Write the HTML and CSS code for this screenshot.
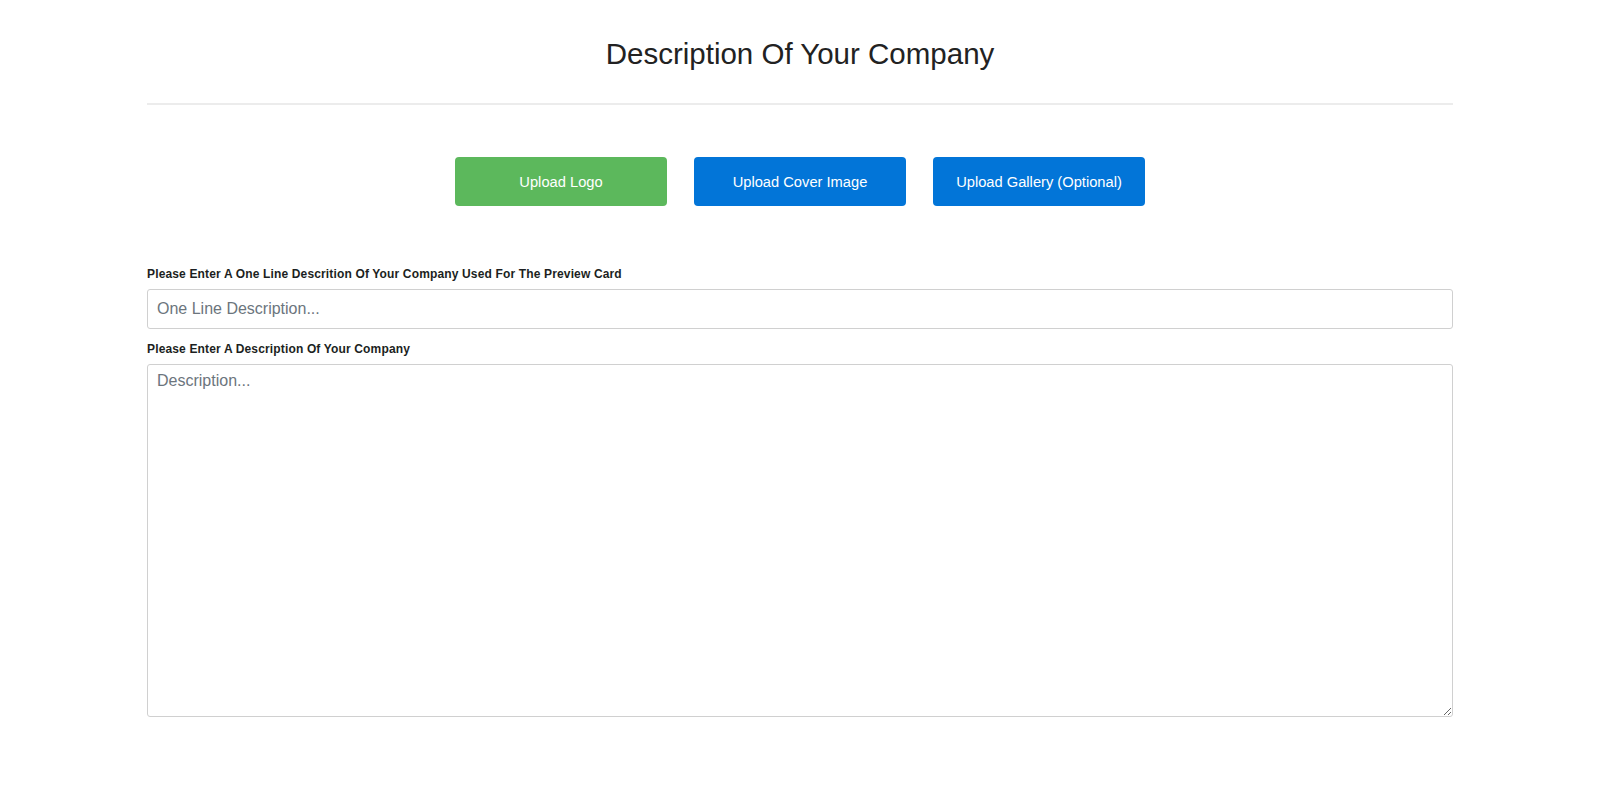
FILE: index.html
```html
<!DOCTYPE html>
<html lang="en">
<head>
<meta charset="utf-8">
<title>Description Of Your Company</title>
<link rel="stylesheet" href="styles.css">
</head>
<body>
<main class="page">
  <h1 class="title">Description Of Your Company</h1>
  <hr class="divider">
  <div class="uploads">
    <button class="btn btn-green" type="button">Upload Logo</button>
    <button class="btn btn-blue" type="button">Upload Cover Image</button>
    <button class="btn btn-blue" type="button">Upload Gallery (Optional)</button>
  </div>
  <form class="form">
    <label class="label" for="oneline">Please Enter A One Line Descrition Of Your Company Used For The Preview Card</label>
    <input class="input" id="oneline" type="text" placeholder="One Line Description...">
    <label class="label label-second" for="desc">Please Enter A Description Of Your Company</label>
    <textarea class="textarea" id="desc" placeholder="Description..."></textarea>
  </form>
</main>
</body>
</html>
```
FILE: styles.css
```css
* { box-sizing: border-box; }
html, body { margin: 0; padding: 0; background: #fff; }
body {
  font-family: "Liberation Sans", Arial, sans-serif;
  color: #212529;
}
.page {
  width: 1306px;
  margin: 0 auto;
  padding-top: 36px;
}
.title {
  margin: 0;
  font-size: 29.5px;
  font-weight: 400;
  line-height: 36px;
  text-align: center;
  color: #222;
}
.divider {
  margin: 31px 0 0;
  border: 0;
  border-top: 2px solid #ececec;
  height: 0;
}
.uploads {
  display: flex;
  justify-content: center;
  gap: 27px;
  margin-top: 52px;
}
.btn {
  width: 212px;
  height: 49px;
  border: 0;
  border-radius: 4px;
  color: #fff;
  font-family: "Liberation Sans", Arial, sans-serif;
  font-size: 14.7px;
  cursor: pointer;
}
.btn-green { background: #5cb85c; }
.btn-blue { background: #0275d8; }
.form {
  display: flex;
  flex-direction: column;
  margin-top: 60px;
}
.label {
  font-size: 12px;
  letter-spacing: 0.15px;
  font-weight: 700;
  line-height: 16px;
  color: #1c1f22;
  margin-bottom: 7px;
}
.label-second { margin-top: 12px; }
.input, .textarea {
  width: 100%;
  border: 1px solid #d0d0d0;
  border-radius: 3px;
  font-family: "Liberation Sans", Arial, sans-serif;
  font-size: 16px;
  color: #495057;
  padding: 0 9px;
  background: #fff;
}
.input { height: 40px; }
.textarea {
  height: 353px;
  padding-top: 7px;
  resize: vertical;
}
.input::placeholder, .textarea::placeholder { color: #6c757d; opacity: 1; }
```
